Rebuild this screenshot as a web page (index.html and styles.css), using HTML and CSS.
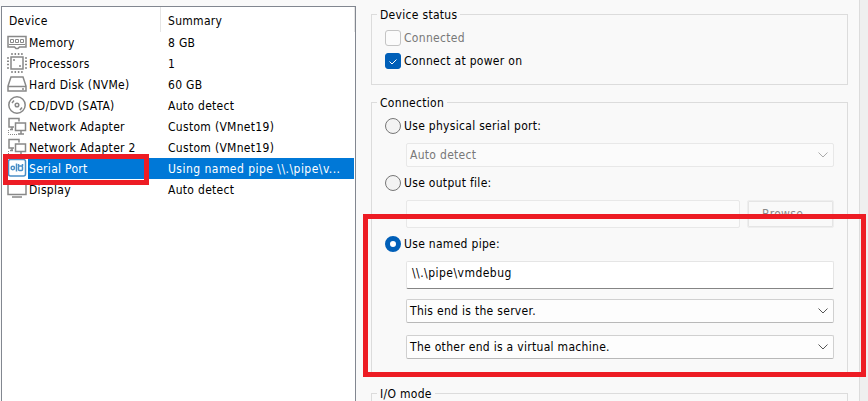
FILE: index.html
```html
<!DOCTYPE html>
<html lang="en">
<head>
<meta charset="utf-8">
<title>Virtual Machine Settings</title>
<link rel="stylesheet" href="styles.css">
</head>
<body>
<main class="dialog">
  <section class="devices">
    <div class="row head"><span class="name">Device</span><span class="summary">Summary</span></div>
    <div class="row">
      <svg class="icon" viewBox="0 0 21 21"><path d="M1 4.500h18v10.500h-6.500l-1.500 1.500h-2l-1.500-1.500H1z"/><path d="M3.500 7.500h3v3h-3zM8.500 7.500h3v3h-3zM13.500 7.500h3v3h-3zM2 12.500h16" class="fine"/></svg>
      <span class="name">Memory</span><span class="summary">8 GB</span></div>
    <div class="row">
      <svg class="icon" viewBox="0 0 21 21"><path d="M4 4h12v12H4z"/><path d="M5 0v2m3.300-2v2m3.300-2v2m3.300-2v2M5 18v2m3.300-2v2m3.300-2v2m3.300-2v2M0 5h2m-2 3.300h2m-2 3.300h2m-2 3.300h2M18 5h2m-2 3.300h2m-2 3.300h2m-2 3.300h2M6 7h2M12 13h2"/></svg>
      <span class="name">Processors</span><span class="summary">1</span></div>
    <div class="row">
      <svg class="icon" viewBox="0 0 21 21"><path d="M4 3h12l3 9v5H1v-5zM1 12.500h18"/><path d="M15 15h2"/></svg>
      <span class="name">Hard Disk (NVMe)</span><span class="summary">60 GB</span></div>
    <div class="row">
      <svg class="icon" viewBox="0 0 21 21"><circle cx="10" cy="10" r="8.200"/><circle cx="10" cy="10" r="1.800"/><path d="M5 8l2-2.500M13 15l2-2.500"/></svg>
      <span class="name">CD/DVD (SATA)</span><span class="summary">Auto detect</span></div>
    <div class="row">
      <svg class="icon" viewBox="0 0 21 21"><path d="M7 11H2V2.500h10v3M8.500 7h10v7.500h-10zM11 18h6M14 15v3M5 11v2.500M3 13.500h3"/><path d="M1.500 14v4.500h9" class="dots"/></svg>
      <span class="name">Network Adapter</span><span class="summary">Custom (VMnet19)</span></div>
    <div class="row">
      <svg class="icon" viewBox="0 0 21 21"><path d="M7 11H2V2.500h10v3M8.500 7h10v7.500h-10zM11 18h6M14 15v3M5 11v2.500M3 13.500h3"/><path d="M1.500 14v4.500h9" class="dots"/></svg>
      <span class="name">Network Adapter 2</span><span class="summary">Custom (VMnet19)</span></div>
    <div class="row selected">
      <svg class="icon serial" viewBox="0 0 21 21"><rect x="1.500" y="1.500" width="17" height="16.500" rx="2"/><circle cx="5.800" cy="10" r="1.700"/><path d="M9.500 5.500v8"/><rect x="11.500" y="8" width="4" height="4.500" rx="1"/><path d="M11.500 6v2M15.500 6v2"/></svg>
      <span class="name">Serial Port</span><span class="summary wide">Using named pipe \\.\pipe\v...</span></div>
    <div class="row">
      <svg class="icon" viewBox="0 0 21 21"><path d="M1 3h18v12.500H1zM5 18h10"/></svg>
      <span class="name">Display</span><span class="summary">Auto detect</span></div>
  </section>
  <section class="settings">
    <fieldset class="group status"><legend>Device status</legend>
      <label class="option disabled"><i class="check"></i><span>Connected</span></label>
      <label class="option second"><i class="check on"><svg viewBox="0 0 14 14"><path d="M3.500 7.500l2.500 2.500 4.500-4.500"/></svg></i><span>Connect at power on</span></label>
    </fieldset>
    <fieldset class="group connection"><legend>Connection</legend>
      <label class="option"><i class="radio"></i><span>Use physical serial port:</span></label>
      <div class="combo off"><span>Auto detect</span><svg viewBox="0 0 10 6"><path d="M.5.5L5 5 9.500.5"/></svg></div>
      <label class="option"><i class="radio"></i><span>Use output file:</span></label>
      <div class="file"><div class="field off"></div><div class="browse"><span>Browse...</span></div></div>
      <label class="option"><i class="radio on"></i><span>Use named pipe:</span></label>
      <div class="field pipe"><span class="wide">\\.\pipe\vmdebug</span></div>
      <div class="combo"><span>This end is the server.</span><svg viewBox="0 0 10 6"><path d="M.5.5L5 5 9.500.5"/></svg></div>
      <div class="combo last"><span>The other end is a virtual machine.</span><svg viewBox="0 0 10 6"><path d="M.5.5L5 5 9.500.5"/></svg></div>
    </fieldset>
    <fieldset class="group io"><legend>I/O mode</legend></fieldset>
  </section>
</main>
<div class="mark mark-device"></div>
<div class="mark mark-pipe"></div>
</body>
</html>
```
FILE: styles.css
```css
* { box-sizing: border-box; }
body { margin: 0; width: 868px; height: 401px; overflow: hidden; background: #efefef; color: #000; font: 12px/21px "DejaVu Sans Condensed", "DejaVu Sans", sans-serif; font-stretch: condensed; letter-spacing: .3px; }
.dialog { display: flex; width: 860px; height: 401px; background: #f9f9f9; border-right: 1px solid #dcdcdc; overflow: hidden; }
.devices { width: 355px; height: 420px; margin: 6px 0 0 1px; flex: none; background: #fff; border: 1px solid #828790; }
.row { display: flex; height: 21px; line-height: 23px; padding-left: 5px; padding-right: 1px; white-space: pre; }
.icon { width: 21px; height: 21px; flex: none; fill: none; stroke: #888; stroke-width: 1.5; }
.icon .fine { stroke-width: 1; }
.icon .dots { stroke-width: 1; stroke-dasharray: 1 1; }
.name { width: 133px; padding-left: 1px; }
.summary { flex: 1; padding-left: 7px; }
.wide { letter-spacing: .47px; }
.head { height: 25px; line-height: 28px; padding-right: 0; }
.head .name { width: 154px; padding-left: 2px; border-right: 1px solid #e5e5e5; }
.head .summary { padding-left: 7px; border-right: 1px solid #e5e5e5; }
.selected .name, .selected .summary { background: #0078d7; color: #fff; }
.icon.serial { stroke: #4a8fc7; fill: #fff; }
.settings { width: 477px; margin-left: 15px; padding-top: 14px; flex: none; }
.group { position: relative; margin: 0; padding: 0 13px; min-width: 0; border: 1px solid #dcdcdc; }
.group legend { position: absolute; left: 5px; top: -10px; height: 20px; line-height: 20px; padding: 0 3px; background: #f9f9f9; }
.status { height: 71px; padding-top: 13px; }
.connection { height: 272px; margin-top: 17px; padding-top: 13px; }
.io { height: 60px; margin-top: 19px; }
.option { display: flex; align-items: center; height: 20px; gap: 3px; white-space: pre; }
.option span, .combo span { padding-top: 1px; }
.option.second { margin-top: 3px; }
.disabled { color: #787878; }
.check, .radio { width: 16px; height: 16px; flex: none; border: 1px solid #c4c4c4; border-radius: 3px; background: #fbfbfb; }
.check.on { background: #005fb8; border-color: #005fb8; }
.check svg { display: block; width: 14px; height: 14px; fill: none; stroke: #fff; }
.radio { border-radius: 50%; border-color: #777; background: #f3f3f3; }
.radio.on { border: 5px solid #005fb8; background: #fff; }
.combo, .field { display: flex; align-items: center; justify-content: space-between; width: 428px; margin-left: 21px; background: #fdfdfd; border: 1px solid #d0d0d0; border-radius: 2px; }
.combo { height: 24px; padding: 0 5px 0 3px; border-bottom-color: #b8b8b8; }
.combo svg { width: 10px; height: 6px; fill: none; stroke: #555; }
.combo.off { margin-top: 7px; margin-bottom: 6px; color: #787878; background: #fbfbfb; border-color: #e8e8e8; }
.combo.off svg { stroke: #aaa; }
.file { display: flex; gap: 7px; margin: 7px 0 6px; }
.field { height: 28px; }
.field.off { width: 334px; background: #fbfbfb; border-color: #e8e8e8; }
.browse { width: 87px; height: 28px; padding: 0 0 0 14px; border: 1px solid #eee; box-shadow: inset 0 0 0 1px #e5e5e5; border-radius: 2px; line-height: 27px; color: #888; }
.field.pipe { margin: 7px 0 10px 21px; padding: 0 5px 4px; background: #fff; border-color: #e5e5e5; border-bottom-color: #858585; }
.combo.last { margin-top: 12px; }
.mark { position: absolute; border: 5px solid #ed1c24; }
.mark-device { left: 3px; top: 154px; width: 146px; height: 31px; }
.mark-pipe { left: 363px; top: 214px; width: 503px; height: 163px; }
```
